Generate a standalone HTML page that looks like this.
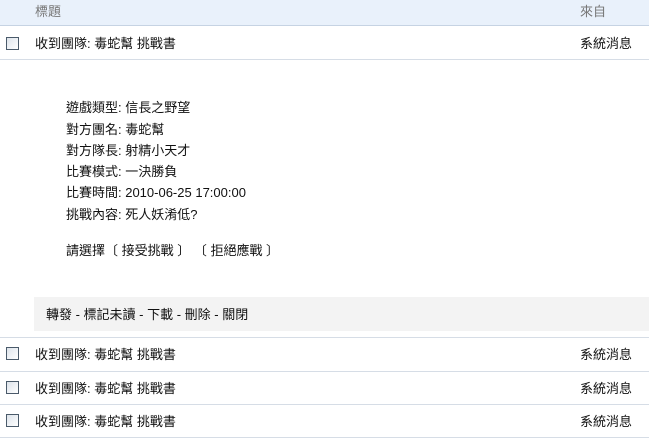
<!DOCTYPE html>
<html><head><meta charset="utf-8"><style>
body{margin:0;width:649px;height:442px;background:#fff;font-family:"Liberation Sans","Noto Sans CJK TC",sans-serif;font-size:13px;color:#111;position:relative;overflow:hidden}
.a{position:absolute;white-space:nowrap;line-height:15px}
.hd{position:absolute;left:0;top:0;width:649px;height:25px;background:#e9f1fb;border-bottom:1px solid #c6d3e3}
.ln{position:absolute;left:0;width:649px;height:1px;background:#d6dde6}
.cb{position:absolute;left:6px;width:13px;height:13px;border:1px solid #4a5a6a;background:linear-gradient(135deg,#dde3ea,#fff);box-sizing:border-box}
.bar{position:absolute;left:34px;top:297px;width:615px;height:34px;background:#f3f3f3}
</style></head><body>
<div class="hd"></div>
<div class="a" style="left:35px;top:4px;color:#777">標題</div>
<div class="a" style="left:580px;top:4px;color:#777">來自</div>

<div class="cb" style="top:37px"></div>
<div class="a" style="left:35px;top:36px">收到團隊: 毒蛇幫 挑戰書</div>
<div class="a" style="left:580px;top:36px">系統消息</div>
<div class="ln" style="top:59px"></div>

<div class="a" style="left:66px;top:100px">遊戲類型: 信長之野望</div>
<div class="a" style="left:66px;top:122px">對方團名: 毒蛇幫</div>
<div class="a" style="left:66px;top:143px">對方隊長: 射精小天才</div>
<div class="a" style="left:66px;top:164px">比賽模式: 一決勝負</div>
<div class="a" style="left:66px;top:185px">比賽時間: 2010-06-25 17:00:00</div>
<div class="a" style="left:66px;top:207px">挑戰內容: 死人妖淆低?</div>
<div class="a" style="left:66px;top:243px">請選擇〔 接受挑戰 〕 〔 拒絕應戰 〕</div>

<div class="bar"></div>
<div class="a" style="left:46px;top:307px">轉發 - 標記未讀 - 下載 - 刪除 - 關閉</div>
<div class="ln" style="top:337px"></div>

<div class="cb" style="top:347px"></div>
<div class="a" style="left:35px;top:347px">收到團隊: 毒蛇幫 挑戰書</div>
<div class="a" style="left:580px;top:347px">系統消息</div>
<div class="ln" style="top:371px"></div>
<div class="cb" style="top:381px"></div>
<div class="a" style="left:35px;top:381px">收到團隊: 毒蛇幫 挑戰書</div>
<div class="a" style="left:580px;top:381px">系統消息</div>
<div class="ln" style="top:404px"></div>
<div class="cb" style="top:414px"></div>
<div class="a" style="left:35px;top:414px">收到團隊: 毒蛇幫 挑戰書</div>
<div class="a" style="left:580px;top:414px">系統消息</div>
<div class="ln" style="top:437px"></div>
</body></html>
